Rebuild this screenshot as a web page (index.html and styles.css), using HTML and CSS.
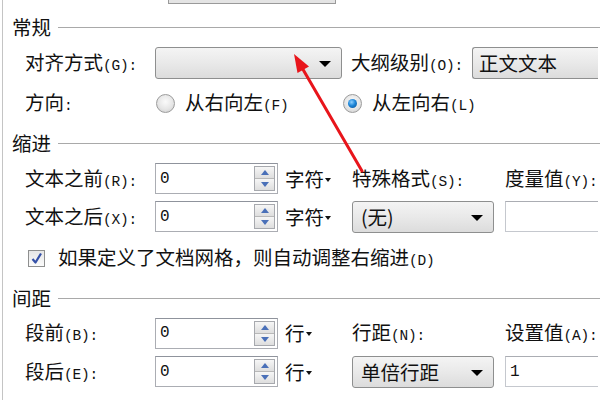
FILE: index.html
```html
<!DOCTYPE html>
<html lang="zh-CN">
<head>
  <meta charset="UTF-8">
  <title>段落</title>
  <link rel="stylesheet" href="styles.css">
</head>
<body>
  <div class="dialog">
    <div class="tab-stub"></div>

    <!-- 常规 -->
    <div class="group-title first"><span>常规</span></div>
    <div class="row row-tall">
      <label class="label">对齐方式<span class="key">(G):</span></label>
      <div class="select select-align"><span class="select-text"></span><i class="caret"></i></div>
      <label class="label label-outline">大纲级别<span class="key">(O):</span></label>
      <div class="select select-wide"><span class="select-text">正文文本</span></div>
    </div>
    <div class="row row-radio">
      <label class="label">方向<span class="key">:</span></label>
      <span class="radio"></span>
      <span class="radio-text">从右向左<span class="key">(F)</span></span>
      <span class="radio checked"></span>
      <span class="radio-text">从左向右<span class="key">(L)</span></span>
    </div>

    <!-- 缩进 -->
    <div class="group-title indent"><span>缩进</span></div>
    <div class="row row-first">
      <label class="label">文本之前<span class="key">(R):</span></label>
      <div class="spin"><span class="spin-value">0</span><span class="spin-btns"><i class="up"></i><i class="down"></i></span></div>
      <span class="unit">字符<i class="mini-caret"></i></span>
      <span class="label label-col2">特殊格式<span class="key">(S):</span></span>
      <span class="label label-col3">度量值<span class="key">(Y):</span></span>
    </div>
    <div class="row row-second">
      <label class="label">文本之后<span class="key">(X):</span></label>
      <div class="spin"><span class="spin-value">0</span><span class="spin-btns"><i class="up"></i><i class="down"></i></span></div>
      <span class="unit">字符<i class="mini-caret"></i></span>
      <div class="select select-mid"><span class="select-text">(无)</span><i class="caret"></i></div>
      <div class="text-input"></div>
    </div>
    <div class="row row-check">
      <span class="checkbox">
        <svg viewBox="0 0 17 17" width="17" height="17">
          <path d="M4.5 9 L7.5 12.5 L13 3.5" fill="none" stroke="#3551a8" stroke-width="2.2" stroke-linejoin="round"/>
        </svg>
      </span>
      <span class="check-text">如果定义了文档网格，则自动调整右缩进<span class="key">(D)</span></span>
    </div>

    <!-- 间距 -->
    <div class="group-title spacing"><span>间距</span></div>
    <div class="row row-first-sp">
      <label class="label">段前<span class="key">(B):</span></label>
      <div class="spin"><span class="spin-value">0</span><span class="spin-btns"><i class="up"></i><i class="down"></i></span></div>
      <span class="unit">行<i class="mini-caret"></i></span>
      <span class="label label-col2">行距<span class="key">(N):</span></span>
      <span class="label label-col3">设置值<span class="key">(A):</span></span>
    </div>
    <div class="row row-second">
      <label class="label">段后<span class="key">(E):</span></label>
      <div class="spin"><span class="spin-value">0</span><span class="spin-btns"><i class="up"></i><i class="down"></i></span></div>
      <span class="unit">行<i class="mini-caret"></i></span>
      <div class="select select-mid"><span class="select-text">单倍行距</span><i class="caret"></i></div>
      <div class="text-input"><span class="spin-value">1</span></div>
    </div>
  </div>

  <svg class="pointer" width="600" height="400" viewBox="0 0 600 400">
    <line x1="362" y1="171" x2="301" y2="66" stroke="#e8151b" stroke-width="3" stroke-linecap="round"/>
    <polygon points="294,54 297.5,73 309,66.5" fill="#e8151b"/>
  </svg>
</body>
</html>
```

FILE: styles.css
```css
* {
  margin: 0;
  padding: 0;
  box-sizing: border-box;
}

html, body {
  width: 600px;
  height: 400px;
  overflow: hidden;
}

body {
  background: #fff;
  color: #111;
  font-family: "Noto Sans CJK SC", "Noto Sans", sans-serif;
  font-size: 19.5px;
  line-height: 1;
  position: relative;
}

.dialog {
  margin-left: 2px;
  width: 598px;
  height: 400px;
  border-left: 1px solid #c4c4c4;
  overflow: hidden;
}

.tab-stub {
  margin-left: 165px;
  width: 168px;
  height: 4px;
  border: 1px solid #9a9a9a;
  border-top: 0;
  background: #e4e4e4;
}

/* group headers */
.group-title {
  display: flex;
  align-items: center;
  height: 20px;
  padding-left: 9px;
}

.group-title::after {
  content: '';
  flex: 1;
  height: 1px;
  background: #a9a9a9;
  margin-left: 7px;
}

.group-title.first { margin-top: 13px; }
.group-title.indent { margin-top: 18px; }
.group-title.spacing { margin-top: 20px; }

/* rows */
.row {
  display: flex;
  align-items: center;
  padding-left: 22px;
  white-space: nowrap;
}

.row-tall { height: 32px; margin-top: 10px; }
.row-radio { height: 24px; margin-top: 12px; }
.row-first { height: 31px; margin-top: 10px; }
.row-first-sp { height: 32px; margin-top: 9px; }
.row-second { height: 31px; margin-top: 7px; }
.row-check { height: 20px; margin-top: 16px; }

.label {
  width: 130px;
  flex: none;
}

.key {
  font-family: "Liberation Mono", monospace;
  font-size: 14.5px;
  letter-spacing: -0.2px;
}

.label-outline {
  width: 121px;
  margin-left: 9px;
}

.label-col2 {
  width: 153px;
}

.label-col3 {
  width: 92px;
}

/* selects */
.select {
  position: relative;
  height: 32px;
  display: flex;
  align-items: center;
  padding-left: 6px;
  border: 1px solid #8e8f8f;
  border-radius: 3px;
  background: linear-gradient(#f4f4f4, #e9e9e9 50%, #dcdcdc);
  flex: none;
}

.select-align { width: 187px; }
.select-wide {
  width: 126px;
  border-right: 0;
  border-radius: 3px 0 0 3px;
}
.select-mid { width: 142px; margin-right: 11px; padding-left: 8px; }

.caret {
  position: absolute;
  right: 10px;
  top: 13px;
  border-left: 6px solid transparent;
  border-right: 6px solid transparent;
  border-top: 6px solid #000;
}

/* spin boxes */
.spin {
  width: 123px;
  height: 31px;
  flex: none;
  display: flex;
  align-items: center;
  border: 1px solid #abadb3;
  border-top-color: #8f939c;
  background: #fff;
}

.spin-value {
  flex: 1;
  padding-left: 4px;
  font-family: "Liberation Mono", monospace;
  font-size: 16px;
}

.spin-btns {
  width: 21px;
  height: 25px;
  margin-right: 2px;
  display: flex;
  flex-direction: column;
  border: 1px solid #a7a9ae;
}

.spin-btns i {
  flex: 1;
  display: flex;
  align-items: center;
  justify-content: center;
  background: linear-gradient(#f6f6f6, #dedede);
}

.spin-btns i + i {
  border-top: 1px solid #b8b8b8;
}

.spin-btns .up::before {
  content: '';
  border-left: 4px solid transparent;
  border-right: 4px solid transparent;
  border-bottom: 5px solid #4a70b8;
}

.spin-btns .down::before {
  content: '';
  border-left: 4px solid transparent;
  border-right: 4px solid transparent;
  border-top: 5px solid #4a70b8;
}

.unit {
  width: 74px;
  flex: none;
  padding-left: 7px;
  display: flex;
  align-items: center;
}

.mini-caret {
  margin-left: 1px;
  margin-top: 2px;
  border-left: 3.5px solid transparent;
  border-right: 3.5px solid transparent;
  border-top: 4px solid #111;
}

.text-input {
  width: 93px;
  height: 31px;
  flex: none;
  display: flex;
  align-items: center;
  border: 1px solid #c5c8ce;
  border-top-color: #abadb3;
  border-right: 0;
  background: #fff;
}

/* radio buttons */
.radio {
  width: 19px;
  height: 19px;
  flex: none;
  margin-left: 1px;
  border-radius: 50%;
  border: 1px solid #9c9c9c;
  background: radial-gradient(circle at 50% 40%, #fafafa 0%, #e6e6e6 55%, #c9c9c9 100%);
  position: relative;
}

.radio.checked::after {
  content: '';
  position: absolute;
  left: 4px;
  top: 4px;
  width: 9px;
  height: 9px;
  border-radius: 50%;
  background: radial-gradient(circle at 40% 35%, #8fd0ff 0%, #1d86d8 45%, #0a4d8f 100%);
}

.radio-text {
  width: 167px;
  flex: none;
  padding-left: 10px;
}

/* checkbox */
.checkbox {
  width: 17px;
  height: 17px;
  flex: none;
  margin-left: 3px;
  margin-right: 13px;
  border: 1px solid #8e8f8f;
  background: linear-gradient(#e6e6e6, #fbfbfb);
  display: flex;
}

.checkbox svg {
  margin: -1px;
}

.pointer {
  position: absolute;
  left: 0;
  top: 0;
  pointer-events: none;
}
```
